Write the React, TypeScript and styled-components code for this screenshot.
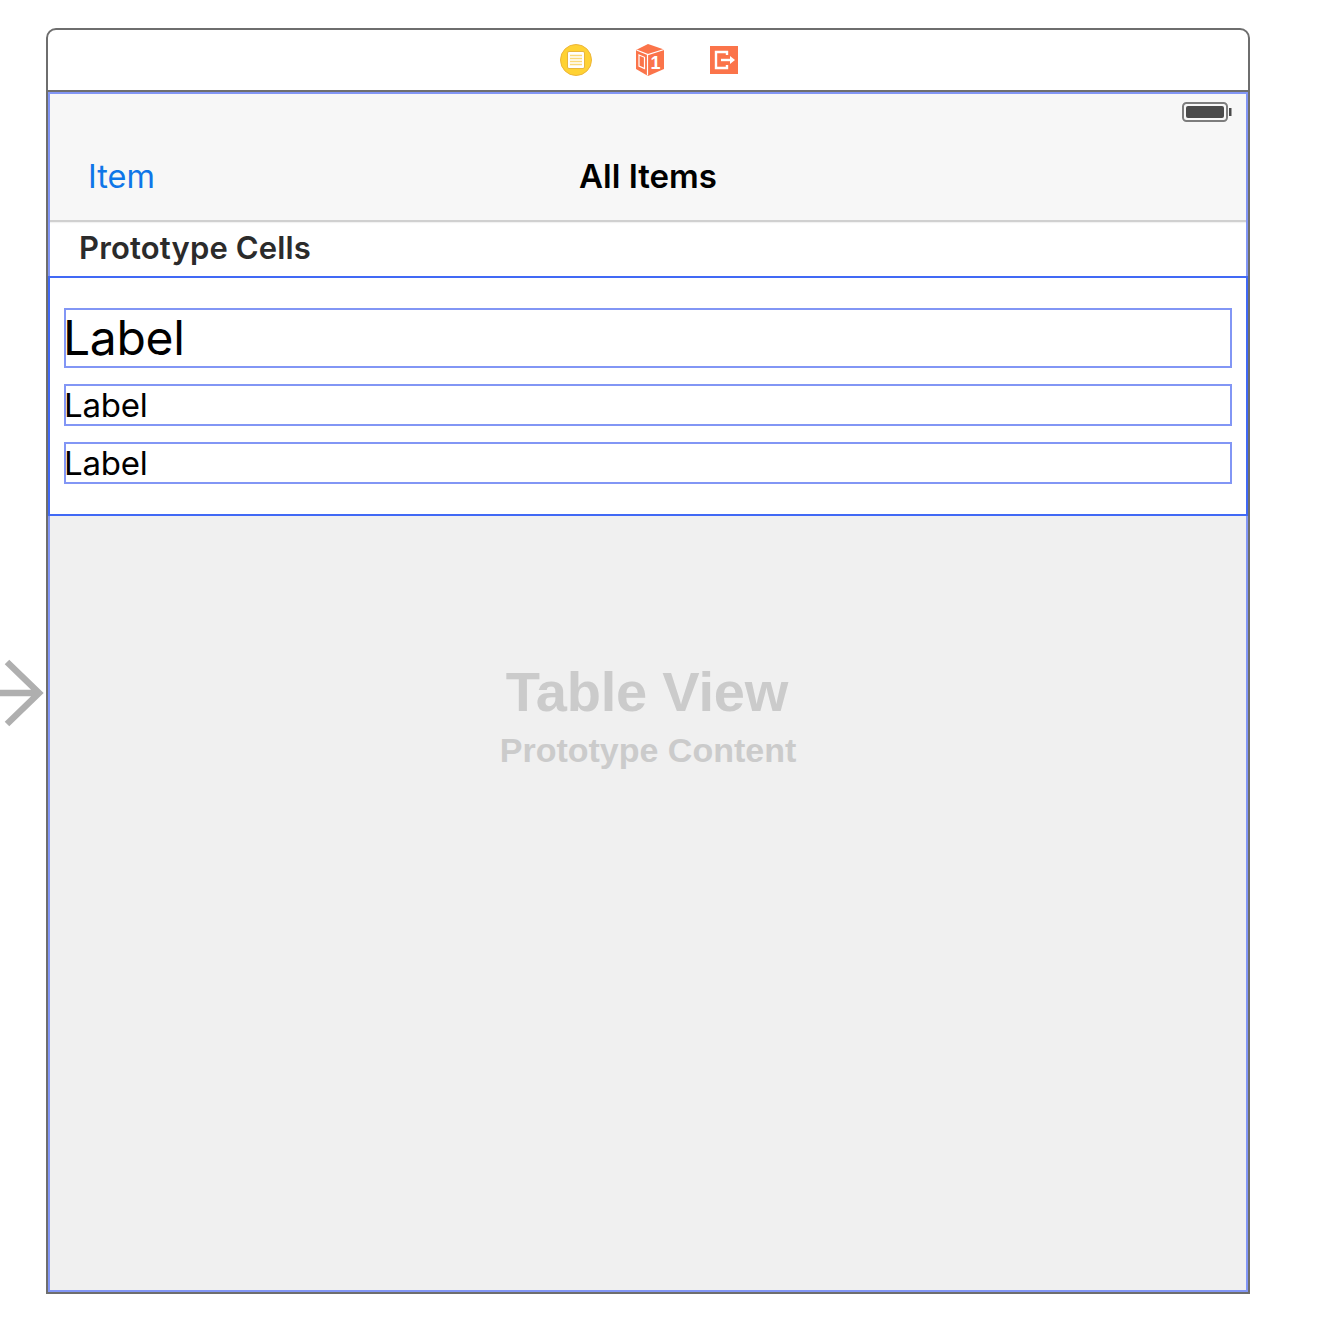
import React from 'react';
import styled, { createGlobalStyle } from 'styled-components';

const GlobalStyle = createGlobalStyle`
  html, body {
    margin: 0;
    padding: 0;
    background: #fff;
  }
`;

const Page = styled.div`
  position: relative;
  width: 1322px;
  height: 1332px;
  padding: 28px 0 0 46px;
  box-sizing: border-box;
`;
const EntryArrow = styled.svg`
  position: absolute;
  left: 0;
  top: 658px;
`;
const Frame = styled.div`
  width: 1204px;
  height: 1266px;
  box-sizing: border-box;
  border: 2px solid #6e6e6e;
  border-radius: 10px 10px 0 0;
  display: flex;
  flex-direction: column;
`;
const Dock = styled.div`
  height: 62px;
  box-sizing: border-box;
  border-bottom: 2px solid #6e6e6e;
  display: flex;
  align-items: center;
  justify-content: center;
  gap: 43px;
  padding-left: 2px;
`;
const DockIcon = styled.svg<{ $offset?: number }>`
  display: block;
  margin-left: ${p => p.$offset || 0}px;
`;
const Scene = styled.div`
  flex: 1;
  border: 2px solid #8296f5;
  display: flex;
  flex-direction: column;
  min-height: 0;
`;
const NavBar = styled.div`
  height: 128px;
  box-sizing: border-box;
  background: #f7f7f7;
  border-bottom: 2px solid #d0d0d0;
  box-shadow: 0 1px 1px rgba(0, 0, 0, 0.05);
  display: flex;
  flex-direction: column;
`;
const StatusRow = styled.div`
  height: 54px;
  display: flex;
  justify-content: flex-end;
  padding: 8px 14px 0 0;
  box-sizing: border-box;
`;
const NavRow = styled.div`
  height: 56px;
  padding: 0 38px;
  display: grid;
  grid-template-columns: 1fr auto 1fr;
  align-items: center;
`;
const NavItem = styled.div`
  font-family: Inter, sans-serif;
  font-size: 32.5px;
  font-weight: 400;
  color: #0f76e8;
`;
const NavTitle = styled.div`
  font-family: Inter, sans-serif;
  font-size: 33px;
  font-weight: 600;
  color: #000;
`;
const SectionTitle = styled.div`
  height: 50px;
  padding: 0 0 4px 29px;
  display: flex;
  align-items: center;
  font-family: Inter, sans-serif;
  font-size: 31px;
  font-weight: 600;
  letter-spacing: 0.15px;
  color: #2b2b2b;
`;
const Cell = styled.div`
  height: 240px;
  margin: 0 -2px;
  box-sizing: border-box;
  border: 2px solid #4169f5;
  background: #fff;
  padding: 30px 14px;
  display: flex;
  flex-direction: column;
  gap: 16px;
`;
const CellLabel = styled.div<{ $large?: boolean }>`
  height: ${p => (p.$large ? 60 : 42)}px;
  box-sizing: border-box;
  border: 2px solid #8296f5;
  padding-bottom: ${p => (p.$large ? 2 : 0)}px;
  display: flex;
  align-items: center;
  text-indent: ${p => (p.$large ? -3 : -2)}px;
  font-family: Inter, sans-serif;
  font-size: ${p => (p.$large ? 48 : 33)}px;
  letter-spacing: ${p => (p.$large ? -0.3 : -0.2)}px;
  font-weight: 400;
  color: #000;
`;
const Placeholder = styled.div`
  flex: 1;
  background: #f0f0f0;
  display: flex;
  flex-direction: column;
  align-items: center;
  padding-top: 144px;
`;
const PlaceholderTitle = styled.div`
  margin-right: 2px;
  font-family: 'Liberation Sans', sans-serif;
  font-size: 56px;
  line-height: 64px;
  letter-spacing: -0.2px;
  font-weight: 700;
  color: #cbcbcb;
`;
const PlaceholderSub = styled.div`
  font-family: 'Liberation Sans', sans-serif;
  font-size: 34px;
  line-height: 40px;
  margin-top: 6px;
  font-weight: 700;
  color: #cbcbcb;
`;
const CubeDigit = styled.text`
  font-family: 'Liberation Sans', sans-serif;
  font-size: 18px;
  font-weight: 700;
  fill: #fff;
`;

const ControllerIcon = () => (
  <DockIcon width='32' height='32' viewBox='0 0 32 32'>
    <circle cx='16' cy='16' r='15.5' fill='#ffd233' stroke='#edb63a' />
    <rect x='7.5' y='7.5' width='17' height='17' rx='1.5' fill='#fff' stroke='#e8b53c' />
    <path d='M10 11.5h12M10 14.5h12M10 17.5h12M10 20.5h12' stroke='#fbd978' strokeWidth='1.3' />
  </DockIcon>
);

const CubeIcon = () => (
  <DockIcon width='30' height='32' viewBox='0 0 30 32'>
    <path d='M13 0 L29 5.5 V25 L13 32 L1 25 V6 Z' fill='#fb744a' />
    <path d='M1.5 6 L13 10.5 L29 5.5' fill='none' stroke='#fff' strokeWidth='1.2' />
    <path d='M12.5 10.5 V31.5' stroke='#fff' strokeWidth='1.2' />
    <path d='M4 11 L9.5 13.3 V24.5 L4 22 Z' fill='none' stroke='#fff' strokeWidth='1.2' />
    <CubeDigit x='15.5' y='24.5'>1</CubeDigit>
  </DockIcon>
);

const ExitIcon = () => (
  <DockIcon $offset={2} width='28' height='28' viewBox='0 0 28 28'>
    <rect width='28' height='28' fill='#fb744a' />
    <path d='M17 9 V6 H6 V22 H17 V19' fill='none' stroke='#fff' strokeWidth='2.4' />
    <path d='M11 14 H21' stroke='#fff' strokeWidth='2.4' />
    <path d='M20 10 L25 14 L20 18 Z' fill='#fff' />
  </DockIcon>
);

const BatteryIcon = () => (
  <svg width='50' height='20' viewBox='0 0 50 20'>
    <rect x='1' y='1' width='44' height='18' rx='3.5' fill='none' stroke='#7d7d7d' strokeWidth='2' />
    <rect x='4' y='4' width='38' height='12' rx='2' fill='#4a4a4a' />
    <rect x='47' y='6' width='2.5' height='8' fill='#4a4a4a' />
  </svg>
);

export default function App() {
  return (
    <Page>
      <GlobalStyle />
      <EntryArrow width='46' height='70' viewBox='0 0 46 70'>
        <path d='M0 35 H39 M7 4 L39 35 L7 66' fill='none' stroke='#afafaf' strokeWidth='6.5' />
      </EntryArrow>
      <Frame>
        <Dock>
          <ControllerIcon />
          <CubeIcon />
          <ExitIcon />
        </Dock>
        <Scene>
          <NavBar>
            <StatusRow>
              <BatteryIcon />
            </StatusRow>
            <NavRow>
              <NavItem>Item</NavItem>
              <NavTitle>All Items</NavTitle>
            </NavRow>
          </NavBar>
          <SectionTitle>Prototype Cells</SectionTitle>
          <Cell>
            <CellLabel $large>Label</CellLabel>
            <CellLabel>Label</CellLabel>
            <CellLabel>Label</CellLabel>
          </Cell>
          <Placeholder>
            <PlaceholderTitle>Table View</PlaceholderTitle>
            <PlaceholderSub>Prototype Content</PlaceholderSub>
          </Placeholder>
        </Scene>
      </Frame>
    </Page>
  );
}
